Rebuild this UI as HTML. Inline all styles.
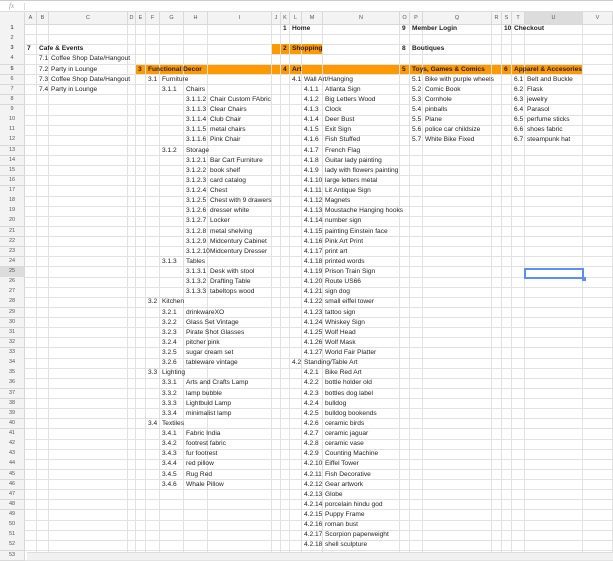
<!DOCTYPE html>
<html><head><meta charset="utf-8"><style>
*{margin:0;padding:0;box-sizing:border-box}
body{width:613px;height:560px;overflow:hidden;background:#fff;font-family:"Liberation Sans",Arial,sans-serif;color:#222;position:relative}
.fb{height:12px;border-top:1px solid #ccc;border-bottom:1px solid #ddd;position:relative}
.fb i{position:absolute;left:9px;top:1px;font-size:7px;color:#999;font-family:"Liberation Serif",serif}
.fb s{position:absolute;left:24px;top:2px;width:1px;height:7px;background:#ddd}
.r{display:grid;grid-template-columns:25px 12px 12px 79px 8px 10px 14px 24px 24px 64px 9px 9px 12px 21px 77px 10px 13px 69px 10px 10px 13px 58px 30px;height:10.14px}
.r>*{border-right:1px solid #e2e2e2;border-bottom:1px solid #e2e2e2;white-space:nowrap;font-size:6.6px;line-height:9.5px;padding-left:2px;font-style:normal}
.r>*:not(:empty){position:relative;z-index:1}
.r>i{background:#f3f3f3;color:#555;text-align:center;padding:0;border-color:#d8d8d8;font-size:5.5px}
.h{height:12px}
.h>*{background:#f3f3f3;color:#555;text-align:center;padding:0;font-size:5.5px;line-height:12px;border-color:#d8d8d8}
.b>*{font-weight:bold}
.o{background:#ff9900}
.sel{background:#dcdcdc!important}
#cur{position:absolute;left:524px;top:268px;width:60px;height:11px;border:2px solid #5a8ff5;z-index:5}
#cur:after{content:"";position:absolute;right:-4px;bottom:-4px;width:4px;height:4px;background:#5a8ff5}
#sb{position:absolute;left:27px;top:552px;width:586px;height:8px;background:#f1f1f1;border-top:1px solid #ddd;z-index:6}
</style></head><body>
<div class="fb"><i>fx</i><s></s></div>
<div class="r h"><i></i><i>A</i><i>B</i><i>C</i><i>D</i><i>E</i><i>F</i><i>G</i><i>H</i><i>I</i><i>J</i><i>K</i><i>L</i><i>M</i><i>N</i><i>O</i><i>P</i><i>Q</i><i>R</i><i>S</i><i>T</i><i class="sel">U</i><i>V</i></div>
<div class="r b"><i>1</i><span></span><span></span><span></span><span></span><span></span><span></span><span></span><span></span><span></span><span></span><span>1</span><span>Home</span><span></span><span></span><span>9</span><span>Member Login</span><span></span><span></span><span>10</span><span>Checkout</span><span></span><span></span></div>
<div class="r"><i>2</i><span></span><span></span><span></span><span></span><span></span><span></span><span></span><span></span><span></span><span></span><span></span><span></span><span></span><span></span><span></span><span></span><span></span><span></span><span></span><span></span><span></span><span></span></div>
<div class="r b"><i>3</i><span>7</span><span>Cafe &amp; Events</span><span></span><span></span><span></span><span></span><span></span><span></span><span></span><span class="o"></span><span class="o">2</span><span class="o">Shopping</span><span class="o"></span><span></span><span>8</span><span>Boutiques</span><span></span><span></span><span></span><span></span><span></span><span></span></div>
<div class="r"><i>4</i><span></span><span>7.1</span><span>Coffee Shop Date/Hangout</span><span></span><span></span><span></span><span></span><span></span><span></span><span></span><span></span><span></span><span></span><span></span><span></span><span></span><span></span><span></span><span></span><span></span><span></span><span></span></div>
<div class="r b"><i>5</i><span></span><span style="font-weight:normal">7.2</span><span style="font-weight:normal">Party in Lounge</span><span></span><span class="o">3</span><span class="o">Functional Decor</span><span class="o"></span><span class="o"></span><span class="o"></span><span class="o"></span><span class="o">4</span><span class="o">Art</span><span class="o"></span><span class="o"></span><span class="o">5</span><span class="o">Toys, Games &amp; Comics</span><span class="o"></span><span class="o"></span><span class="o">6</span><span class="o">Apparel &amp; Accesories</span><span class="o"></span><span></span></div>
<div class="r"><i>6</i><span></span><span>7.3</span><span>Coffee Shop Date/Hangout</span><span></span><span></span><span>3.1</span><span>Furniture</span><span></span><span></span><span></span><span></span><span>4.1</span><span>Wall Art/Hanging</span><span></span><span></span><span>5.1</span><span>Bike with purple wheels</span><span></span><span></span><span>6.1</span><span>Belt and Buckle</span><span></span></div>
<div class="r"><i>7</i><span></span><span>7.4</span><span>Party in Lounge</span><span></span><span></span><span></span><span>3.1.1</span><span>Chairs</span><span></span><span></span><span></span><span></span><span>4.1.1</span><span>Atlanta Sign</span><span></span><span>5.2</span><span>Comic Book</span><span></span><span></span><span>6.2</span><span>Flask</span><span></span></div>
<div class="r"><i>8</i><span></span><span></span><span></span><span></span><span></span><span></span><span></span><span>3.1.1.2</span><span>Chair Custom FAbric</span><span></span><span></span><span></span><span>4.1.2</span><span>Big Letters Wood</span><span></span><span>5.3</span><span>Cornhole</span><span></span><span></span><span>6.3</span><span>jewelry</span><span></span></div>
<div class="r"><i>9</i><span></span><span></span><span></span><span></span><span></span><span></span><span></span><span>3.1.1.3</span><span>Clear Chairs</span><span></span><span></span><span></span><span>4.1.3</span><span>Clock</span><span></span><span>5.4</span><span>pinballs</span><span></span><span></span><span>6.4</span><span>Parasol</span><span></span></div>
<div class="r"><i>10</i><span></span><span></span><span></span><span></span><span></span><span></span><span></span><span>3.1.1.4</span><span>Club Chair</span><span></span><span></span><span></span><span>4.1.4</span><span>Deer Bust</span><span></span><span>5.5</span><span>Plane</span><span></span><span></span><span>6.5</span><span>perfume sticks</span><span></span></div>
<div class="r"><i>11</i><span></span><span></span><span></span><span></span><span></span><span></span><span></span><span>3.1.1.5</span><span>metal chairs</span><span></span><span></span><span></span><span>4.1.5</span><span>Exit Sign</span><span></span><span>5.6</span><span>police car childsize</span><span></span><span></span><span>6.6</span><span>shoes fabric</span><span></span></div>
<div class="r"><i>12</i><span></span><span></span><span></span><span></span><span></span><span></span><span></span><span>3.1.1.6</span><span>Pink Chair</span><span></span><span></span><span></span><span>4.1.6</span><span>Fish Stuffed</span><span></span><span>5.7</span><span>White Bike Fixed</span><span></span><span></span><span>6.7</span><span>steampunk hat</span><span></span></div>
<div class="r"><i>13</i><span></span><span></span><span></span><span></span><span></span><span></span><span>3.1.2</span><span>Storage</span><span></span><span></span><span></span><span></span><span>4.1.7</span><span>French Flag</span><span></span><span></span><span></span><span></span><span></span><span></span><span></span><span></span></div>
<div class="r"><i>14</i><span></span><span></span><span></span><span></span><span></span><span></span><span></span><span>3.1.2.1</span><span>Bar Cart Furniture</span><span></span><span></span><span></span><span>4.1.8</span><span>Guitar lady painting</span><span></span><span></span><span></span><span></span><span></span><span></span><span></span><span></span></div>
<div class="r"><i>15</i><span></span><span></span><span></span><span></span><span></span><span></span><span></span><span>3.1.2.2</span><span>book shelf</span><span></span><span></span><span></span><span>4.1.9</span><span>lady with flowers painting</span><span></span><span></span><span></span><span></span><span></span><span></span><span></span><span></span></div>
<div class="r"><i>16</i><span></span><span></span><span></span><span></span><span></span><span></span><span></span><span>3.1.2.3</span><span>card catalog</span><span></span><span></span><span></span><span>4.1.10</span><span>large letters metal</span><span></span><span></span><span></span><span></span><span></span><span></span><span></span><span></span></div>
<div class="r"><i>17</i><span></span><span></span><span></span><span></span><span></span><span></span><span></span><span>3.1.2.4</span><span>Chest</span><span></span><span></span><span></span><span>4.1.11</span><span>Lit Antique Sign</span><span></span><span></span><span></span><span></span><span></span><span></span><span></span><span></span></div>
<div class="r"><i>18</i><span></span><span></span><span></span><span></span><span></span><span></span><span></span><span>3.1.2.5</span><span>Chest with 9 drawers</span><span></span><span></span><span></span><span>4.1.12</span><span>Magnets</span><span></span><span></span><span></span><span></span><span></span><span></span><span></span><span></span></div>
<div class="r"><i>19</i><span></span><span></span><span></span><span></span><span></span><span></span><span></span><span>3.1.2.6</span><span>dresser white</span><span></span><span></span><span></span><span>4.1.13</span><span>Moustache Hanging hooks</span><span></span><span></span><span></span><span></span><span></span><span></span><span></span><span></span></div>
<div class="r"><i>20</i><span></span><span></span><span></span><span></span><span></span><span></span><span></span><span>3.1.2.7</span><span>Locker</span><span></span><span></span><span></span><span>4.1.14</span><span>number sign</span><span></span><span></span><span></span><span></span><span></span><span></span><span></span><span></span></div>
<div class="r"><i>21</i><span></span><span></span><span></span><span></span><span></span><span></span><span></span><span>3.1.2.8</span><span>metal shelving</span><span></span><span></span><span></span><span>4.1.15</span><span>painting Einstein face</span><span></span><span></span><span></span><span></span><span></span><span></span><span></span><span></span></div>
<div class="r"><i>22</i><span></span><span></span><span></span><span></span><span></span><span></span><span></span><span>3.1.2.9</span><span>Midcentury Cabinet</span><span></span><span></span><span></span><span>4.1.16</span><span>Pink Art Print</span><span></span><span></span><span></span><span></span><span></span><span></span><span></span><span></span></div>
<div class="r"><i>23</i><span></span><span></span><span></span><span></span><span></span><span></span><span></span><span>3.1.2.10</span><span>Midcentury Dresser</span><span></span><span></span><span></span><span>4.1.17</span><span>print art</span><span></span><span></span><span></span><span></span><span></span><span></span><span></span><span></span></div>
<div class="r"><i>24</i><span></span><span></span><span></span><span></span><span></span><span></span><span>3.1.3</span><span>Tables</span><span></span><span></span><span></span><span></span><span>4.1.18</span><span>printed words</span><span></span><span></span><span></span><span></span><span></span><span></span><span></span><span></span></div>
<div class="r"><i class="sel">25</i><span></span><span></span><span></span><span></span><span></span><span></span><span></span><span>3.1.3.1</span><span>Desk with stool</span><span></span><span></span><span></span><span>4.1.19</span><span>Prison Train Sign</span><span></span><span></span><span></span><span></span><span></span><span></span><span></span><span></span></div>
<div class="r"><i>26</i><span></span><span></span><span></span><span></span><span></span><span></span><span></span><span>3.1.3.2</span><span>Drafting Table</span><span></span><span></span><span></span><span>4.1.20</span><span>Route US66</span><span></span><span></span><span></span><span></span><span></span><span></span><span></span><span></span></div>
<div class="r"><i>27</i><span></span><span></span><span></span><span></span><span></span><span></span><span></span><span>3.1.3.3</span><span>tabeltops wood</span><span></span><span></span><span></span><span>4.1.21</span><span>sign dog</span><span></span><span></span><span></span><span></span><span></span><span></span><span></span><span></span></div>
<div class="r"><i>28</i><span></span><span></span><span></span><span></span><span></span><span>3.2</span><span>Kitchen</span><span></span><span></span><span></span><span></span><span></span><span>4.1.22</span><span>small eiffel tower</span><span></span><span></span><span></span><span></span><span></span><span></span><span></span><span></span></div>
<div class="r"><i>29</i><span></span><span></span><span></span><span></span><span></span><span></span><span>3.2.1</span><span>drinkwareXO</span><span></span><span></span><span></span><span></span><span>4.1.23</span><span>tattoo sign</span><span></span><span></span><span></span><span></span><span></span><span></span><span></span><span></span></div>
<div class="r"><i>30</i><span></span><span></span><span></span><span></span><span></span><span></span><span>3.2.2</span><span>Glass Set Vintage</span><span></span><span></span><span></span><span></span><span>4.1.24</span><span>Whiskey Sign</span><span></span><span></span><span></span><span></span><span></span><span></span><span></span><span></span></div>
<div class="r"><i>31</i><span></span><span></span><span></span><span></span><span></span><span></span><span>3.2.3</span><span>Pirate Shot Glasses</span><span></span><span></span><span></span><span></span><span>4.1.25</span><span>Wolf Head</span><span></span><span></span><span></span><span></span><span></span><span></span><span></span><span></span></div>
<div class="r"><i>32</i><span></span><span></span><span></span><span></span><span></span><span></span><span>3.2.4</span><span>pitcher pink</span><span></span><span></span><span></span><span></span><span>4.1.26</span><span>Wolf Mask</span><span></span><span></span><span></span><span></span><span></span><span></span><span></span><span></span></div>
<div class="r"><i>33</i><span></span><span></span><span></span><span></span><span></span><span></span><span>3.2.5</span><span>sugar cream set</span><span></span><span></span><span></span><span></span><span>4.1.27</span><span>World Fair Platter</span><span></span><span></span><span></span><span></span><span></span><span></span><span></span><span></span></div>
<div class="r"><i>34</i><span></span><span></span><span></span><span></span><span></span><span></span><span>3.2.6</span><span>tableware vintage</span><span></span><span></span><span></span><span>4.2</span><span>Standing/Table Art</span><span></span><span></span><span></span><span></span><span></span><span></span><span></span><span></span><span></span></div>
<div class="r"><i>35</i><span></span><span></span><span></span><span></span><span></span><span>3.3</span><span>Lighting</span><span></span><span></span><span></span><span></span><span></span><span>4.2.1</span><span>Bike Red Art</span><span></span><span></span><span></span><span></span><span></span><span></span><span></span><span></span></div>
<div class="r"><i>36</i><span></span><span></span><span></span><span></span><span></span><span></span><span>3.3.1</span><span>Arts and Crafts Lamp</span><span></span><span></span><span></span><span></span><span>4.2.2</span><span>bottle holder old</span><span></span><span></span><span></span><span></span><span></span><span></span><span></span><span></span></div>
<div class="r"><i>37</i><span></span><span></span><span></span><span></span><span></span><span></span><span>3.3.2</span><span>lamp bubble</span><span></span><span></span><span></span><span></span><span>4.2.3</span><span>bottles dog label</span><span></span><span></span><span></span><span></span><span></span><span></span><span></span><span></span></div>
<div class="r"><i>38</i><span></span><span></span><span></span><span></span><span></span><span></span><span>3.3.3</span><span>Lightbuld Lamp</span><span></span><span></span><span></span><span></span><span>4.2.4</span><span>bulldog</span><span></span><span></span><span></span><span></span><span></span><span></span><span></span><span></span></div>
<div class="r"><i>39</i><span></span><span></span><span></span><span></span><span></span><span></span><span>3.3.4</span><span>minimalist lamp</span><span></span><span></span><span></span><span></span><span>4.2.5</span><span>bulldog bookends</span><span></span><span></span><span></span><span></span><span></span><span></span><span></span><span></span></div>
<div class="r"><i>40</i><span></span><span></span><span></span><span></span><span></span><span>3.4</span><span>Textiles</span><span></span><span></span><span></span><span></span><span></span><span>4.2.6</span><span>ceramic birds</span><span></span><span></span><span></span><span></span><span></span><span></span><span></span><span></span></div>
<div class="r"><i>41</i><span></span><span></span><span></span><span></span><span></span><span></span><span>3.4.1</span><span>Fabric India</span><span></span><span></span><span></span><span></span><span>4.2.7</span><span>ceramic jaguar</span><span></span><span></span><span></span><span></span><span></span><span></span><span></span><span></span></div>
<div class="r"><i>42</i><span></span><span></span><span></span><span></span><span></span><span></span><span>3.4.2</span><span>footrest fabric</span><span></span><span></span><span></span><span></span><span>4.2.8</span><span>ceramic vase</span><span></span><span></span><span></span><span></span><span></span><span></span><span></span><span></span></div>
<div class="r"><i>43</i><span></span><span></span><span></span><span></span><span></span><span></span><span>3.4.3</span><span>fur footrest</span><span></span><span></span><span></span><span></span><span>4.2.9</span><span>Counting Machine</span><span></span><span></span><span></span><span></span><span></span><span></span><span></span><span></span></div>
<div class="r"><i>44</i><span></span><span></span><span></span><span></span><span></span><span></span><span>3.4.4</span><span>red pillow</span><span></span><span></span><span></span><span></span><span>4.2.10</span><span>Eiffel Tower</span><span></span><span></span><span></span><span></span><span></span><span></span><span></span><span></span></div>
<div class="r"><i>45</i><span></span><span></span><span></span><span></span><span></span><span></span><span>3.4.5</span><span>Rug Red</span><span></span><span></span><span></span><span></span><span>4.2.11</span><span>Fish Decorative</span><span></span><span></span><span></span><span></span><span></span><span></span><span></span><span></span></div>
<div class="r"><i>46</i><span></span><span></span><span></span><span></span><span></span><span></span><span>3.4.6</span><span>Whale Pillow</span><span></span><span></span><span></span><span></span><span>4.2.12</span><span>Gear artwork</span><span></span><span></span><span></span><span></span><span></span><span></span><span></span><span></span></div>
<div class="r"><i>47</i><span></span><span></span><span></span><span></span><span></span><span></span><span></span><span></span><span></span><span></span><span></span><span></span><span>4.2.13</span><span>Globe</span><span></span><span></span><span></span><span></span><span></span><span></span><span></span><span></span></div>
<div class="r"><i>48</i><span></span><span></span><span></span><span></span><span></span><span></span><span></span><span></span><span></span><span></span><span></span><span></span><span>4.2.14</span><span>porcelain hindu god</span><span></span><span></span><span></span><span></span><span></span><span></span><span></span><span></span></div>
<div class="r"><i>49</i><span></span><span></span><span></span><span></span><span></span><span></span><span></span><span></span><span></span><span></span><span></span><span></span><span>4.2.15</span><span>Puppy Frame</span><span></span><span></span><span></span><span></span><span></span><span></span><span></span><span></span></div>
<div class="r"><i>50</i><span></span><span></span><span></span><span></span><span></span><span></span><span></span><span></span><span></span><span></span><span></span><span></span><span>4.2.16</span><span>roman bust</span><span></span><span></span><span></span><span></span><span></span><span></span><span></span><span></span></div>
<div class="r"><i>51</i><span></span><span></span><span></span><span></span><span></span><span></span><span></span><span></span><span></span><span></span><span></span><span></span><span>4.2.17</span><span>Scorpion paperweight</span><span></span><span></span><span></span><span></span><span></span><span></span><span></span><span></span></div>
<div class="r"><i>52</i><span></span><span></span><span></span><span></span><span></span><span></span><span></span><span></span><span></span><span></span><span></span><span></span><span>4.2.18</span><span>shell sculpture</span><span></span><span></span><span></span><span></span><span></span><span></span><span></span><span></span></div>
<div class="r"><i>53</i><span></span><span></span><span></span><span></span><span></span><span></span><span></span><span></span><span></span><span></span><span></span><span></span><span>4.2.19</span><span>rock sculpture</span><span></span><span></span><span></span><span></span><span></span><span></span><span></span><span></span></div>
<div id="cur"></div>
<div id="sb"></div>
</body></html>
